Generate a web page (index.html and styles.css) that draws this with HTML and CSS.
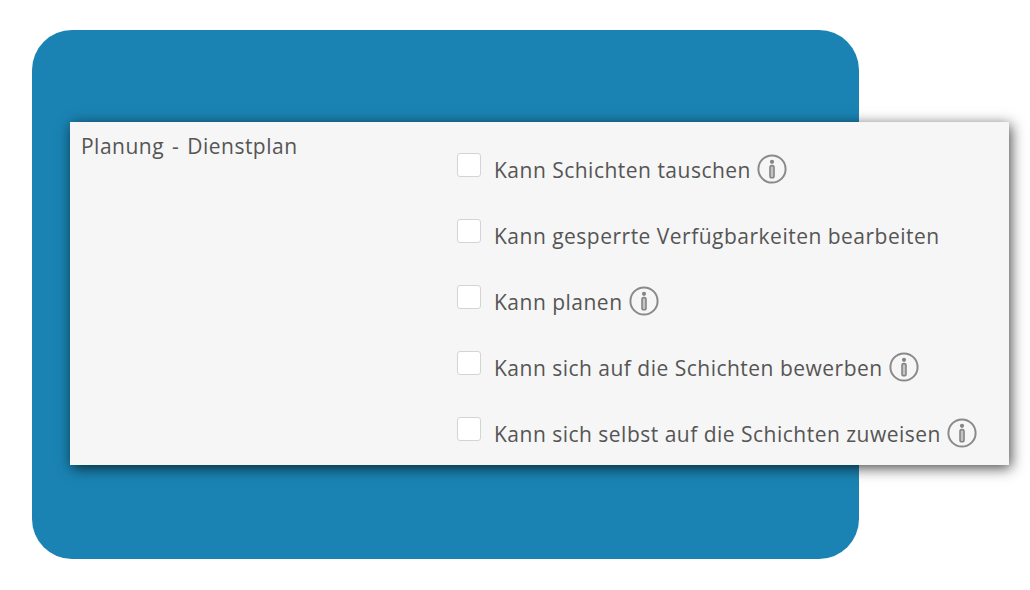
FILE: index.html
```html
<!DOCTYPE html>
<html lang="de">
<head>
  <meta charset="UTF-8">
  <title>Planung - Dienstplan</title>
  <link rel="stylesheet" href="styles.css">
</head>
<body>
  <svg class="icon-defs" width="0" height="0">
    <symbol id="info" viewBox="0 0 30 30">
      <circle cx="15" cy="15" r="13.6" fill="none" stroke="#8a8a8a" stroke-width="2"/>
      <circle cx="15" cy="7.8" r="2.1" fill="#858585"/>
      <rect x="13" y="11.6" width="4" height="12.2" rx="1.8" fill="#c4c4c4" stroke="#858585" stroke-width="1.6"/>
    </symbol>
  </svg>
  <div class="backdrop">
    <div class="panel">
      <div class="panel-title">Planung - Dienstplan</div>
      <div class="options">
        <div class="option">
          <span class="checkbox"></span>
          <span class="option-label">Kann Schichten tauschen</span>
          <svg class="info-icon"><use href="#info"/></svg>
        </div>
        <div class="option">
          <span class="checkbox"></span>
          <span class="option-label">Kann gesperrte Verfügbarkeiten bearbeiten</span>
        </div>
        <div class="option">
          <span class="checkbox"></span>
          <span class="option-label">Kann planen</span>
          <svg class="info-icon"><use href="#info"/></svg>
        </div>
        <div class="option">
          <span class="checkbox"></span>
          <span class="option-label">Kann sich auf die Schichten bewerben</span>
          <svg class="info-icon"><use href="#info"/></svg>
        </div>
        <div class="option">
          <span class="checkbox"></span>
          <span class="option-label">Kann sich selbst auf die Schichten zuweisen</span>
          <svg class="info-icon"><use href="#info"/></svg>
        </div>
      </div>
    </div>
  </div>
</body>
</html>
```

FILE: styles.css
```css
html, body {
  margin: 0;
  height: 100%;
  overflow: hidden;
  background-color: #fff;
}

body {
  padding: 30px 0 0 32px;
  box-sizing: border-box;
  font-family: "Open Sans", "Noto Sans", sans-serif;
  font-size: 21px;
  letter-spacing: 0.49px;
  color: #555;
}

.icon-defs {
  position: absolute;
}

.backdrop {
  width: 827px;
  height: 529px;
  padding: 92px 0 0 38px;
  box-sizing: border-box;
  background-color: #1a83b3;
  border-radius: 40px;
}

.panel {
  display: flex;
  width: 939px;
  height: 343px;
  background-color: #f6f6f6;
  box-shadow: 2px 3px 13px rgba(0, 0, 0, 0.72);
}

.panel-title {
  width: 387px;
  padding: 9px 0 0 11px;
  box-sizing: border-box;
  line-height: 30px;
  word-spacing: 2px;
}

.options {
  display: flex;
  flex-direction: column;
  gap: 42px;
  padding-top: 31px;
}

.option {
  display: flex;
  align-items: flex-start;
  height: 24px;
}

.checkbox {
  width: 22px;
  height: 22px;
  margin-right: 13px;
  background-color: #fff;
  border: 1px solid #d4d4d4;
  border-radius: 3px;
}

.option-label {
  margin-top: 1px;
  line-height: 32px;
}

.info-icon {
  width: 30px;
  height: 30px;
  margin: 1px 0 0 6px;
}
```
